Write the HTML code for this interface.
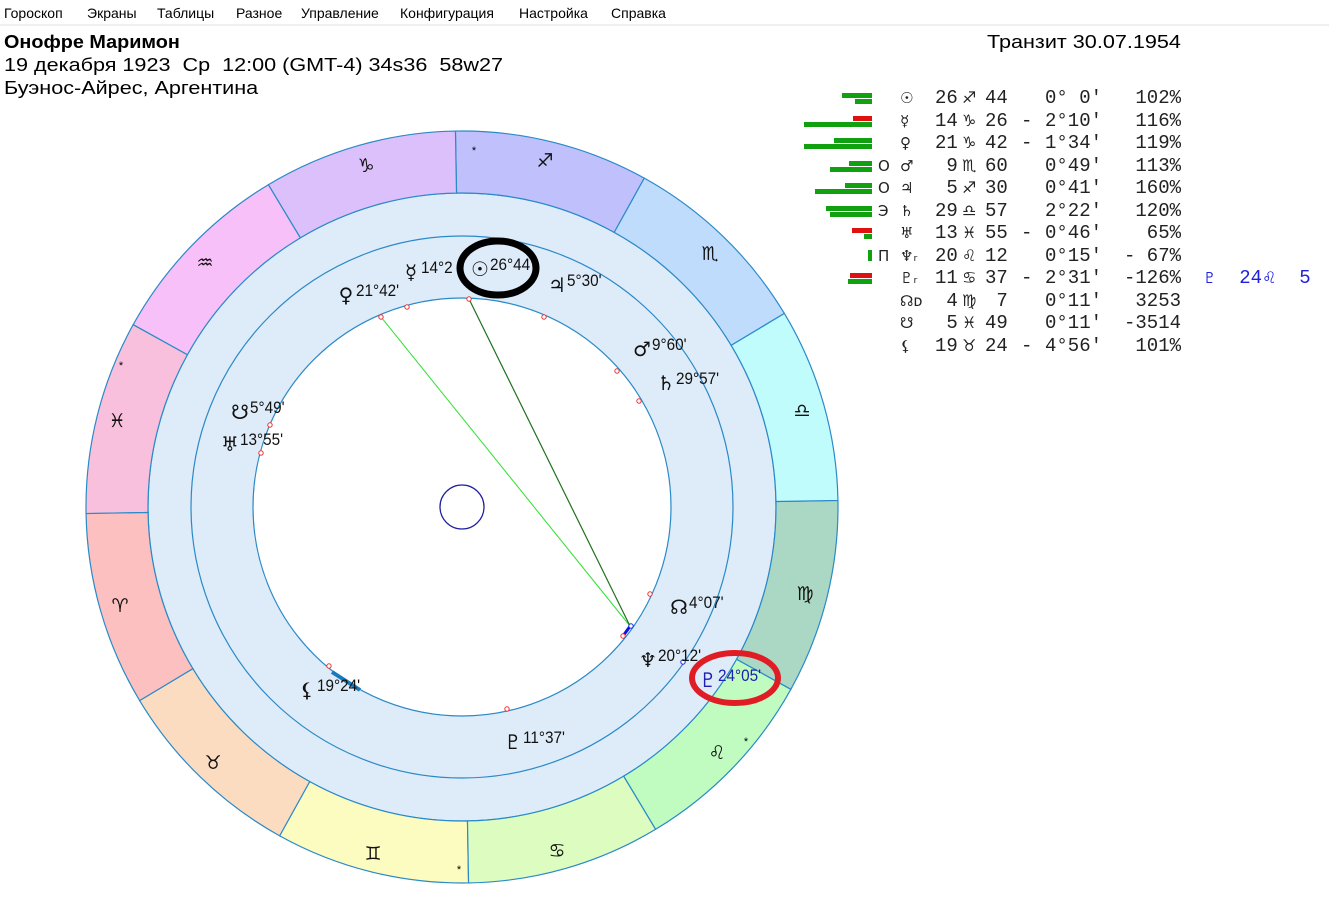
<!DOCTYPE html>
<html><head><meta charset="utf-8">
<style>
body{margin:0;width:1329px;height:907px;background:#fff;overflow:hidden;position:relative;font-family:"Liberation Sans","DejaVu Sans",sans-serif;}
#menu{position:absolute;left:0;top:0;width:1329px;height:24px;border-bottom:2px solid #f0f0f0;font-size:14px;color:#000;}
#menu span{position:absolute;top:5px;}
.h{position:absolute;font-size:18px;color:#000;white-space:nowrap;transform:scaleX(1.2);transform-origin:left top;}
.tb{position:absolute;font-family:"Liberation Mono","DejaVu Sans Mono",monospace;font-size:19px;color:#222;white-space:pre;line-height:20px;}
.bar{position:absolute;height:5px;}
.g{background:#10a010}.r{background:#e01010}
</style></head><body>
<div id="menu">
<span style="left:4px">Гороскоп</span><span style="left:87px">Экраны</span><span style="left:157px">Таблицы</span><span style="left:236px">Разное</span><span style="left:301px">Управление</span><span style="left:400px">Конфигурация</span><span style="left:519px">Настройка</span><span style="left:611px">Справка</span>
</div>
<div class="h" style="left:4px;top:32px;font-weight:bold;transform:scaleX(1.1)">Онофре Маримон</div>
<div class="h" style="left:4px;top:55px">19 декабря 1923&nbsp; Ср&nbsp; 12:00 (GMT-4) 34s36&nbsp; 58w27</div>
<div class="h" style="left:4px;top:78px">Буэнос-Айрес, Аргентина</div>
<div class="h" style="left:987px;top:32px">Транзит 30.07.1954</div>

<svg id="ch" width="1329" height="907" style="position:absolute;left:0;top:0" xmlns="http://www.w3.org/2000/svg"></svg>
<div id="tbl"></div>
<script>
var cx=462,cy=507,R1=376,R2=314,R3=271,R4=209;
function P(r,a){a=a*Math.PI/180;return [cx+r*Math.cos(a),cy-r*Math.sin(a)];}
var cols=["#c0c0fc","#dcc0fc","#f8c0f8","#f8c0dc","#fcc0c0","#fcdcc0","#fcfcc0","#dcfcc0","#c0fcc0","#aad8c4","#c0fcfc","#c0dcfc"];
var s='<circle cx="'+cx+'" cy="'+cy+'" r="'+R2+'" fill="#deebf8" stroke="#2a8ac8" stroke-width="1.2"/>';
for(var i=0;i<12;i++){var a1=61+30*i,a2=a1+30;var p1=P(R1,a1),p2=P(R1,a2),p3=P(R2,a2),p4=P(R2,a1);
s+='<path d="M'+p1+' A'+R1+' '+R1+' 0 0 0 '+p2+' L'+p3+' A'+R2+' '+R2+' 0 0 1 '+p4+' Z" fill="'+cols[i]+'" stroke="#2a8ac8" stroke-width="1.2"/>';}
s+='<circle cx="'+cx+'" cy="'+cy+'" r="'+R3+'" fill="none" stroke="#2a8ac8" stroke-width="1.2"/>';
s+='<circle cx="'+cx+'" cy="'+cy+'" r="'+R4+'" fill="#fff" stroke="#2a8ac8" stroke-width="1.2"/>';
s+='<circle cx="'+cx+'" cy="'+cy+'" r="22" fill="none" stroke="#2020a0" stroke-width="1.3"/>';
s+='<line x1="381" y1="317" x2="630" y2="626" stroke="#30e030" stroke-width="1"/>';
s+='<line x1="469" y1="299" x2="630" y2="626" stroke="#207020" stroke-width="1.2"/>';
s+='<line x1="623" y1="636" x2="631" y2="625" stroke="#1010e0" stroke-width="3"/>';
s+='<line x1="332" y1="672" x2="360" y2="690" stroke="#1a7ac0" stroke-width="4"/>';
[[381,317],[407,307],[469,299],[544,317],[617,371],[639,401],[650,594],[623,636],[507,709],[329,666],[261,453],[270,425]].forEach(function(p){s+='<circle cx="'+p[0]+'" cy="'+p[1]+'" r="2.2" fill="#fff" stroke="#f03030" stroke-width="1"/>';});
[[631,626],[683,662]].forEach(function(p){s+='<circle cx="'+p[0]+'" cy="'+p[1]+'" r="2.2" fill="#fff" stroke="#2020f0" stroke-width="1"/>';});
var zg=[["♑",366,165],["♐",545,160],["♏",710,253],["♎",802,410],["♍",805,593],["♌",717,752],["♋",557,850],["♊",373,853],["♉",213,762],["♈",120,605],["♓",117,420],["♒",205,262]];
zg.forEach(function(z){s+='<text x="'+z[1]+'" y="'+(z[2]+7)+'" font-family="DejaVu Sans" font-size="19" text-anchor="middle" fill="#111">'+z[0]+'</text>';});
[[474,150],[121,365],[746,741],[459,869]].forEach(function(p){s+='<text x="'+p[0]+'" y="'+(p[1]+4)+'" font-size="11" text-anchor="middle">*</text>';});
var pl=[["☿","14°2",411,271,"#111"],["☉","26°44",480,268,"#111"],["♃","5°30'",557,284,"#111"],["♀","21°42'",346,294,"#111"],["♂","9°60'",642,348,"#111"],["♄","29°57'",666,382,"#111"],["☋","5°49'",240,411,"#111"],["♅","13°55'",230,443,"#111"],["☊","4°07'",679,606,"#111"],["♆","20°12'",648,659,"#111"],["♇","24°05'",708,679,"#2020b0"],["♇","11°37'",513,741,"#111"],["⚸","19°24'",307,689,"#111"]];
pl.forEach(function(p){var tx=p[2]+10;s+='<text x="'+p[2]+'" y="'+(p[3]+8)+'" font-family="DejaVu Sans" font-size="20" text-anchor="middle" fill="'+p[4]+'">'+p[0]+'</text><text x="'+tx+'" y="'+(p[3]+2)+'" font-family="Liberation Sans" font-size="17" fill="'+p[4]+'" transform="translate('+tx+' 0) scale(.9 1) translate('+(-tx)+' 0)">'+p[1]+'</text>';});
s+='<ellipse cx="498" cy="268" rx="38" ry="27" fill="none" stroke="#000" stroke-width="7"/>';
s+='<ellipse cx="735" cy="678" rx="43" ry="25" fill="none" stroke="#e01c24" stroke-width="6"/>';
document.getElementById('ch').innerHTML=s;

var rows=[["☉","","26","♐","44"," ","0° 0'","102%",[["g",842],["g",855]]],
["☿","","14","♑","26","-","2°10'","116%",[["r",853],["g",804]]],
["♀","","21","♑","42","-","1°34'","119%",[["g",834],["g",804]]],
["♂","O"," 9","♏","60"," ","0°49'","113%",[["g",849],["g",830]]],
["♃","O"," 5","♐","30"," ","0°41'","160%",[["g",845],["g",815]]],
["♄","Э","29","♎","57"," ","2°22'","120%",[["g",826],["g",830]]],
["♅","","13","♓","55","-","0°46'"," 65%",[["r",852],["g",864]]],
["♆ᵣ","П","20","♌","12"," ","0°15'","- 67%",[]],
["♇ᵣ","","11","♋","37","-","2°31'","-126%",[["r",850],["g",848]]],
["☊ᴅ",""," 4","♍"," 7"," ","0°11'","3253",[]],
["☋",""," 5","♓","49"," ","0°11'","-3514",[]],
["⚸","","19","♉","24","-","4°56'","101%",[]]];
var h='';
rows.forEach(function(r,i){var y=98+i*22.5;
function t(x,txt,extra){h+='<div class="tb" style="left:'+x+'px;top:'+(y-10)+'px;'+(extra||'')+'">'+txt+'</div>';}
t(900,r[0],'font-family:DejaVu Sans;font-size:15px');
if(r[1])t(878,r[1],'font-family:DejaVu Sans;font-size:15px');
t(935,r[2]);t(962,r[3],'font-family:DejaVu Sans;font-size:16px');t(985,r[4]);
if(r[5]!=" ")t(1021,"-");
t(1045,r[6]);
h+='<div class="tb" style="right:'+(1329-1181)+'px;top:'+(y-10)+'px">'+r[7]+'</div>';
r[8].forEach(function(b,k){h+='<div class="bar '+b[0]+'" style="left:'+b[1]+'px;width:'+(872-b[1])+'px;top:'+(y-5+k*6)+'px"></div>';});
});
h+='<div class="bar g" style="left:868px;width:4px;top:250px;height:11px"></div>';
h+='<div class="tb" style="left:1203px;top:268px;color:#2020e0"><span style="font-family:DejaVu Sans;font-size:15px">♇</span>  24<span style="font-family:DejaVu Sans;font-size:16px">♌</span>  5</div>';
document.getElementById('tbl').innerHTML=h;
</script>
</body></html>
